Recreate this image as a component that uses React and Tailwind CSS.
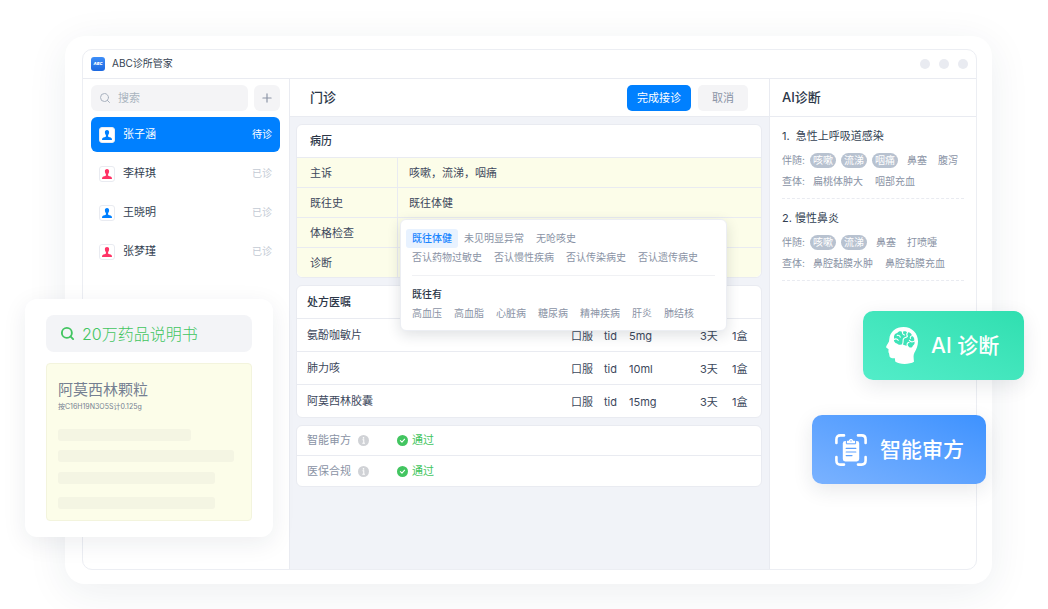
import React from 'react'
import { Plus, Search } from 'lucide-react'

const patients = [
  { name: '张子涵', status: '待诊', color: '#0080ff', active: true },
  { name: '李梓琪', status: '已诊', color: '#ff3366' },
  { name: '王晓明', status: '已诊', color: '#0080ff' },
  { name: '张梦瑾', status: '已诊', color: '#ff3366' },
]

const records = [
  { label: '主诉', value: '咳嗽，流涕，咽痛' },
  { label: '既往史', value: '既往体健', open: true },
  { label: '体格检查', value: '' },
  { label: '诊断', value: '' },
]

const prescriptions = [
  { name: '氨酚咖敏片', usage: '口服', freq: 'tid', dose: '5mg', days: '3天', count: '1盒' },
  { name: '肺力咳', usage: '口服', freq: 'tid', dose: '10ml', days: '3天', count: '1盒' },
  { name: '阿莫西林胶囊', usage: '口服', freq: 'tid', dose: '15mg', days: '3天', count: '1盒' },
]

const checks = ['智能审方', '医保合规']

const diagnoses = [
  {
    title: '1.  急性上呼吸道感染',
    matched: ['咳嗽', '流涕', '咽痛'],
    others: ['鼻塞', '腹泻'],
    exams: ['扁桃体肿大', '咽部充血'],
  },
  {
    title: '2. 慢性鼻炎',
    matched: ['咳嗽', '流涕'],
    others: ['鼻塞', '打喷嚏'],
    exams: ['鼻腔黏膜水肿', '鼻腔黏膜充血'],
  },
]

const PersonIcon = ({ color }) => (
  <span className="flex size-4 shrink-0 items-center justify-center rounded-[3px] border border-[#e9ebf1] bg-white">
    <svg viewBox="0 0 10 10" className="size-[10px]" fill={color}>
      <path d="M5 0C6.5 0 7.2 1 7.1 2.5 7 3.8 6.5 4.6 6.1 5.1V6.4C6.6 7 8.6 7.2 9.4 7.9 9.8 8.3 10 9 10 10H0C0 9 .2 8.3 .6 7.9 1.4 7.2 3.4 7 3.9 6.4V5.1C3.5 4.6 3 3.8 2.9 2.5 2.8 1 3.5 0 5 0Z" />
    </svg>
  </span>
)

const InfoIcon = () => (
  <svg viewBox="0 0 12 12" className="size-[11px]">
    <circle cx="6" cy="6" r="6" fill="#d0d2d6" />
    <circle cx="6" cy="3.2" r="0.9" fill="#fff" />
    <path d="M4.9 5.2H6.3V8.8M4.7 8.9H7.6" stroke="#fff" strokeWidth="1.1" fill="none" />
  </svg>
)

const CheckIcon = () => (
  <svg viewBox="0 0 12 12" className="size-[11px]">
    <circle cx="6" cy="6" r="6" fill="#42c560" />
    <path d="M3.7 6.1L5.4 7.7L8.3 4.6" stroke="#fff" strokeWidth="1.2" fill="none" strokeLinecap="round" strokeLinejoin="round" />
  </svg>
)

const BrainIcon = () => (
  <svg viewBox="0 0 32 37" className="h-[37px] w-8">
    <path
      fill="#fff"
      d="M3.3 12C4 4.5 10 0 17.5 0C26 0 32 6.3 32 14.3C32 19 30.4 22.6 28.3 26C27 28.5 27.8 32 28 34.8C24 37.6 13 37.8 9.2 34.6L8.9 31.2C6 31.4 4 31 3.6 29.5L3 26.2C2.3 25.4 2.3 24 2.6 22.2L.5 20.8C-.2 20.2 .2 19.2 .8 18.2L3 14.6Z"
    />
    <path
      fill="#3de3b8"
      d="M8.2 11.2C7.4 8.4 9.3 6.2 11.3 6C12.3 4.2 14.8 3.8 16.3 4.9C17.6 3.9 20.2 4 21.3 5.4C23.6 5 25.7 6.6 25.9 8.8C27.9 9.8 28.8 12 28.1 13.8C29.2 15.8 28.5 18 26.8 18.7C26.5 20.2 24.9 21 23.6 20.4L21.6 18.4C19.6 18.8 17.6 18.2 16.6 17C15 18 12.2 17.8 11 16.4C8.8 16.2 7.3 13.6 8.2 11.2Z"
    />
    <g fill="none" stroke="#fff" strokeWidth="1.1" strokeLinecap="round">
      <path d="M16.4 4.4C16.2 6.6 17 7.6 18.6 8M11.2 8.4C12.8 8 14 8.8 14.2 10.2M8 12.4C9.8 11.4 11.6 12 12.2 13.4" />
      <path d="M21.6 5.4C20.6 6.4 20.8 8.2 21.4 9.2C20.6 10.8 18.2 10.4 17.4 12C16.8 13.4 17.6 14.2 16.6 17.2" />
      <path d="M26 8.8C24.6 9 24 10.2 24.4 11.4M28.2 14.2C26.6 15 24.4 14.8 23.4 13.4M21.4 18.6C20.6 17 21.4 15.6 23 15.4" />
    </g>
  </svg>
)

const ScanIcon = () => (
  <svg viewBox="0 0 32 32" className="size-8">
    <g fill="none" stroke="#fff" strokeWidth="2.6" strokeLinecap="round">
      <path d="M1.4 9V5.4Q1.4 1.4 5.4 1.4H9" />
      <path d="M23 1.4H26.6Q30.6 1.4 30.6 5.4V9" />
      <path d="M30.6 23V26.6Q30.6 30.6 26.6 30.6H23" />
      <path d="M9 30.6H5.4Q1.4 30.6 1.4 26.6V23" />
    </g>
    <rect x="7.8" y="7" width="16.4" height="20.4" rx="2.4" fill="#fff" />
    <path d="M11.4 7V9.8H20.6V7" fill="#fff" stroke="#5ea2ff" strokeWidth="1" />
    <path d="M12.2 8.8V6.8H14C14 5.6 14.9 5 16 5S18 5.6 18 6.8H19.8V8.8Z" fill="#fff" />
    <circle cx="16" cy="6.9" r="0.7" fill="#5ea2ff" />
    <path d="M11.2 14.4H20.8M11.2 18H20.8M11.2 21.6H17" stroke="#5ea2ff" strokeWidth="1.2" strokeLinecap="round" />
  </svg>
)

function Sidebar() {
  return (
    <aside className="w-[207px] shrink-0 border-r border-[#e9ebf1] pt-[6px] pr-[9px] pl-2">
      <div className="flex gap-[6px]">
        <label className="flex h-[26px] min-w-0 flex-1 items-center gap-[7px] rounded-md bg-[#f4f4f6] px-2">
          <Search className="size-3 shrink-0 text-[#a9b2bf]" strokeWidth={2} />
          <input
            aria-label="搜索"
            placeholder="搜索"
            className="w-full min-w-0 bg-transparent text-[11px] outline-none placeholder:text-[#aab4bf]"
          />
        </label>
        <button aria-label="新增" className="flex size-[26px] items-center justify-center rounded-md bg-[#f4f4f6] text-[#8b94a5]">
          <Plus className="size-[14px]" strokeWidth={2} />
        </button>
      </div>
      <ul className="mt-[6px] flex flex-col gap-1">
        {patients.map((p) => (
          <li key={p.name}>
            <button
              className={`flex h-[35px] w-full items-center gap-2 rounded-md px-2 text-[11px] ${
                p.active ? 'bg-[#0080ff] text-white' : 'text-[#333f52]'
              }`}
            >
              <PersonIcon color={p.color} />
              <span>{p.name}</span>
              <span className={`ml-auto text-[10px] ${p.active ? 'text-white' : 'text-[#c3cad4]'}`}>{p.status}</span>
            </button>
          </li>
        ))}
      </ul>
    </aside>
  )
}

function HistoryPopup() {
  return (
    <div className="absolute top-full left-[2px] z-10 mt-[2px] w-[327px] rounded-md border border-[#eceef3] bg-white px-[11px] pt-[9px] pb-[7px] text-[10px] leading-[19px] text-[#8a93a5] shadow-[0_4px_14px_rgba(30,40,60,0.14)]">
      <div className="flex gap-3">
        <button className="-mx-[6px] rounded-[3px] bg-[#e8f2ff] px-[6px] font-medium text-[#1a85ff]">既往体健</button>
        <button>未见明显异常</button>
        <button>无呛咳史</button>
      </div>
      <div className="flex gap-3">
        <button>否认药物过敏史</button>
        <button>否认慢性疾病</button>
        <button>否认传染病史</button>
        <button>否认遗传病史</button>
      </div>
      <hr className="my-2 border-[#f0f1f4]" />
      <h4 className="pt-px font-medium text-[#2b3648]">既往有</h4>
      <div className="flex gap-3">
        <button>高血压</button>
        <button>高血脂</button>
        <button>心脏病</button>
        <button>糖尿病</button>
        <button>精神疾病</button>
        <button>肝炎</button>
        <button>肺结核</button>
      </div>
    </div>
  )
}

function Outpatient() {
  return (
    <main className="min-w-0 flex-1 bg-[#f1f3f8]">
      <header className="flex h-[38px] items-center gap-[7px] border-b border-[#e9ebf1] bg-white pr-[21px] pl-5">
        <h2 className="mr-auto text-[13px] font-medium text-[#2b3648]">门诊</h2>
        <button className="h-[26px] w-16 rounded-[5px] bg-[#0080ff] pt-px text-[11px] text-white">完成接诊</button>
        <button className="h-[26px] w-[50px] rounded-[5px] bg-[#f4f4f6] pt-px text-[11px] text-[#8a93a5]">取消</button>
      </header>

      <div className="flex flex-col gap-[7px] py-[7px] pr-[7px] pl-[6px] text-[11px] text-[#3c485c]">
        <section className="rounded-md border border-[#e9ebf1] bg-white">
          <h3 className="flex h-8 items-center px-[13px] font-medium text-[#2b3648]">病历</h3>
          <table className="w-full table-fixed border-separate border-spacing-0">
            <tbody>
              {records.map((r, i) => (
                <tr key={r.label} className="h-[30px]">
                  <th
                    className={`w-[101px] border-t border-r border-[#e9ebf1] bg-[#fcfde9] px-[13px] pt-px text-left font-normal ${
                      i === records.length - 1 ? 'rounded-bl-md' : ''
                    }`}
                  >
                    {r.label}
                  </th>
                  <td
                    className={`relative border-t border-[#e9ebf1] bg-[#fcfde9] px-[11px] pt-px ${
                      i === records.length - 1 ? 'rounded-br-md' : ''
                    }`}
                  >
                    {r.value}
                    {r.open && <HistoryPopup />}
                  </td>
                </tr>
              ))}
            </tbody>
          </table>
        </section>

        <section className="rounded-md border border-[#e9ebf1] bg-white">
          <h3 className="flex h-8 items-center px-[10px] font-medium text-[#2b3648]">处方医嘱</h3>
          <table className="w-full table-fixed border-separate border-spacing-0">
            <tbody>
              {prescriptions.map((p) => (
                <tr key={p.name} className="h-[33px] *:border-t *:border-[#e9ebf1]">
                  <td className="pl-[10px]">{p.name}</td>
                  <td className="w-[33px] pt-[3px]">{p.usage}</td>
                  <td className="w-[25px] pt-[3px]">{p.freq}</td>
                  <td className="w-[71px] pt-[3px]">{p.dose}</td>
                  <td className="w-8 pt-[3px]">{p.days}</td>
                  <td className="w-[29px] pt-[3px]">{p.count}</td>
                </tr>
              ))}
            </tbody>
          </table>
        </section>

        <section className="divide-y divide-[#e9ebf1] rounded-md border border-[#e9ebf1] bg-white">
          {checks.map((c) => (
            <div key={c} className="flex h-[30px] items-center px-[10px]">
              <div className="flex w-[90px] items-center gap-[7px] text-[#8a93a5]">
                {c}
                <InfoIcon />
              </div>
              <div className="flex items-center gap-1 text-[#42c560]">
                <CheckIcon />
                通过
              </div>
            </div>
          ))}
        </section>
      </div>
    </main>
  )
}

function Diagnosis() {
  return (
    <aside className="w-[207px] shrink-0 border-l border-[#e9ebf1]">
      <h2 className="flex h-[38px] items-center border-b border-[#e9ebf1] px-3 text-[13px] font-medium text-[#2b3648]">AI诊断</h2>
      <div className="px-3">
        {diagnoses.map((d) => (
          <section key={d.title} className="border-b border-dashed border-[#e9ebf1] pt-[10px] pb-[6px] text-[10px] whitespace-nowrap text-[#8a93a5]">
            <h3 className="text-[11px] leading-[18px] whitespace-pre text-[#333f52]">{d.title}</h3>
            <div className="mt-[5px] flex items-center gap-[5px] leading-[21px]">
              <span className="w-[23px]">伴随:</span>
              {d.matched.map((m) => (
                <span key={m} className="rounded-full bg-[#b8c2d0] px-[3px] leading-[15px] text-white">
                  {m}
                </span>
              ))}
              <div className="ml-1 flex gap-[11px]">
                {d.others.map((o) => (
                  <span key={o}>{o}</span>
                ))}
              </div>
            </div>
            <div className="flex leading-[21px]">
              <span className="w-[31px]">查体:</span>
              <div className="flex gap-3">
                {d.exams.map((e) => (
                  <span key={e}>{e}</span>
                ))}
              </div>
            </div>
          </section>
        ))}
      </div>
    </aside>
  )
}

function DrugCard() {
  return (
    <div className="absolute top-[299px] left-[25px] w-[248px] rounded-xl bg-white px-[21px] py-4 shadow-[0_6px_24px_rgba(30,40,60,0.08)]">
      <div className="flex h-[37px] items-center gap-[7px] rounded-lg bg-[#f3f4f7] px-[14px] text-[16px] font-light text-[#42c560]">
        <Search className="size-[15px]" strokeWidth={3} />
        20万药品说明书
      </div>
      <div className="mt-[11px] rounded-[4px] border border-[#f3f4dd] bg-[#fcfde9] px-[11px] pt-[15px] pb-[11px] text-[#757f92]">
        <h3 className="text-[15px] leading-[22px]">阿莫西林颗粒</h3>
        <p className="text-[7px] leading-[12px]">按C16H19N3O5S计0.125g</p>
        <div className="mt-4 h-3 w-[133px] rounded-[3px] bg-[#f4f5e3]" />
        <div className="mt-[9px] h-3 w-[176px] rounded-[3px] bg-[#f4f5e3]" />
        <div className="mt-[10px] h-3 w-[157px] rounded-[3px] bg-[#f4f5e3]" />
        <div className="mt-[13px] h-3 w-[157px] rounded-[3px] bg-[#f4f5e3]" />
      </div>
    </div>
  )
}

export default function App() {
  return (
    <div className="relative flex min-h-screen overflow-hidden bg-white pt-9 pr-14 pb-[25px] pl-[65px] font-['Inter','Noto_Sans_CJK_SC',sans-serif]">
      <div className="flex min-w-0 flex-1 rounded-[20px] bg-white pt-[13px] pr-[15px] pb-[14px] pl-[17px] shadow-[0_8px_40px_rgba(30,45,80,0.08)]">
        <div className="flex min-w-0 flex-1 flex-col overflow-hidden rounded-[10px] border border-[#eceef3]">
          <div className="flex h-[29px] shrink-0 items-center gap-[7px] border-b border-[#e9ebf1] px-2 pb-px">
            <span className="flex size-[14px] items-center justify-center rounded-[3px] bg-linear-to-b from-[#3d8ef8] to-[#1c68e0] text-[4px] leading-none font-black text-white italic">
              ABC
            </span>
            <h1 className="text-[10px] text-[#333f52]">ABC诊所管家</h1>
            <div className="ml-auto flex gap-[9px]">
              <span className="size-[10px] rounded-full bg-[#e9ebf1]" />
              <span className="size-[10px] rounded-full bg-[#e9ebf1]" />
              <span className="size-[10px] rounded-full bg-[#e9ebf1]" />
            </div>
          </div>
          <div className="flex flex-1">
            <Sidebar />
            <Outpatient />
            <Diagnosis />
          </div>
        </div>
      </div>

      <DrugCard />

      <button className="absolute top-[311px] right-6 flex h-[69px] w-[161px] items-center gap-[13px] rounded-[10px] bg-linear-to-tr from-[#52edc9] to-[#2fdfb0] pl-[23px] text-[21px] font-medium whitespace-nowrap text-white shadow-[0_6px_20px_rgba(30,40,60,0.1)]">
        <BrainIcon />
        AI 诊断
      </button>
      <button className="absolute top-[415px] right-[62px] flex h-[69px] w-[174px] items-center gap-[13px] rounded-[10px] bg-linear-to-tr from-[#7ab2ff] to-[#3d92ff] pl-[23px] text-[21px] font-medium whitespace-nowrap text-white shadow-[0_6px_20px_rgba(30,40,60,0.1)]">
        <ScanIcon />
        智能审方
      </button>
    </div>
  )
}
